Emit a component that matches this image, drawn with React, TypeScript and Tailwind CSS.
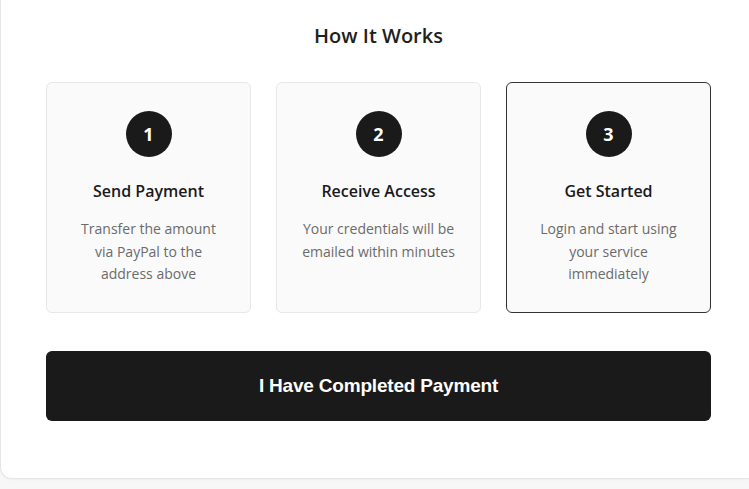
import React from "react";

const steps = [
  { n: "1", title: "Send Payment", lines: ["Transfer the amount", "via PayPal to the", "address above"], active: false },
  { n: "2", title: "Receive Access", lines: ["Your credentials will be", "emailed within minutes"], active: false },
  { n: "3", title: "Get Started", lines: ["Login and start using", "your service", "immediately"], active: true },
];

const App = () => {
  return (
    <div className="min-h-screen bg-[#f7f7f7] font-['Open_Sans',sans-serif]">
      <section className="bg-white border-l border-b border-[#e6e6e6] rounded-bl-xl shadow-[0_1px_2px_rgba(0,0,0,0.04)] pl-[45px] pr-[38px] pt-[21px] pb-[57px]">
        <h2 className="text-center text-[20px] leading-[30px] font-semibold text-[#1f1f1f]">
          How It Works
        </h2>
        <div className="grid grid-cols-3 gap-[25px] mt-[31px]">
          {steps.map((s) => (
            <div
              key={s.n}
              className={
                "h-[231px] rounded-md bg-[#fafafa] flex flex-col items-center pt-[28px] px-3 text-center border " +
                (s.active ? "border-[#333333]" : "border-[#e8e8e8]")
              }
            >
              <div className="w-[46px] h-[46px] rounded-full bg-[#1a1a1a] text-white flex items-center justify-center text-[18px] font-bold">
                {s.n}
              </div>
              <h3 className="mt-[22px] text-[16px] leading-[24px] font-semibold text-[#1a1a1a]">
                {s.title}
              </h3>
              <p className="mt-[15px] text-[14px] leading-[22.5px] text-[#6b6b6b]">
                {s.lines.map((l) => (
                  <span key={l} className="block">
                    {l}
                  </span>
                ))}
              </p>
            </div>
          ))}
        </div>
        <button className="mt-[38px] w-full h-[70px] rounded-md bg-[#1a1a1a] text-white font-['Liberation_Sans',Arial,sans-serif] font-bold text-[19px] tracking-[-0.2px]">
          I Have Completed Payment
        </button>
      </section>
    </div>
  );
};

export default App;
